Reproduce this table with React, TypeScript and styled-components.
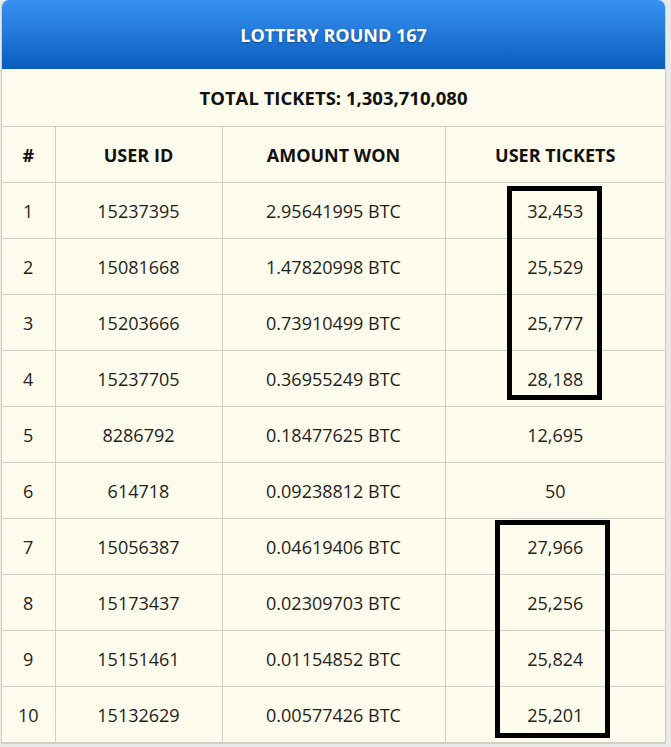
import styled, { createGlobalStyle } from "styled-components";

interface IWinner {
  rank: number;
  userId: string;
  amount: string;
  tickets: string;
}

const winners: IWinner[] = [
  { rank: 1, userId: "15237395", amount: "2.95641995 BTC", tickets: "32,453" },
  { rank: 2, userId: "15081668", amount: "1.47820998 BTC", tickets: "25,529" },
  { rank: 3, userId: "15203666", amount: "0.73910499 BTC", tickets: "25,777" },
  { rank: 4, userId: "15237705", amount: "0.36955249 BTC", tickets: "28,188" },
  { rank: 5, userId: "8286792", amount: "0.18477625 BTC", tickets: "12,695" },
  { rank: 6, userId: "614718", amount: "0.09238812 BTC", tickets: "50" },
  { rank: 7, userId: "15056387", amount: "0.04619406 BTC", tickets: "27,966" },
  { rank: 8, userId: "15173437", amount: "0.02309703 BTC", tickets: "25,256" },
  { rank: 9, userId: "15151461", amount: "0.01154852 BTC", tickets: "25,824" },
  { rank: 10, userId: "15132629", amount: "0.00577426 BTC", tickets: "25,201" },
];

const GlobalStyle = createGlobalStyle`
  html, body {
    margin: 0;
    padding: 0;
    background: #e9e9e9;
    font-family: "Open Sans", "Liberation Sans", sans-serif;
  }
`;

const Panel = styled.div`
  position: relative;
  width: 663px;
  margin-left: 1px;
  background-color: #fdfbec;
  border: 1px solid #cfcfc6;
  border-top: none;
  border-radius: 7px 7px 0 0;
`;

const Banner = styled.div`
  display: flex;
  align-items: center;
  justify-content: center;
  height: 69px;
  border-radius: 7px 7px 0 0;
  background: linear-gradient(to bottom, #3892f2, #0a5dbd);
  color: #ffffff;
  font-weight: 700;
  font-size: 18px;
  text-shadow: 0 1px 2px rgba(0, 0, 0, 0.35);
`;

const Table = styled.table`
  width: 100%;
  border-collapse: collapse;
  table-layout: fixed;
  color: #1f1f1f;
`;

const Col = styled.col<{ $width?: number }>`
  width: ${(p) => (p.$width ? `${p.$width}px` : "auto")};
`;

const TotalCell = styled.td`
  height: 57px;
  padding: 0;
  text-align: center;
  font-weight: 700;
  font-size: 18.5px;
  color: #111;
  border-bottom: 1px solid #cfcfc6;
`;

const HeadCell = styled.th`
  height: 55px;
  padding: 0;
  text-align: center;
  font-weight: 700;
  font-size: 18px;
  color: #111;
  border: 1px solid #cfcfc6;
  border-top: none;
  &:first-child { border-left: none; }
  &:last-child { border-right: none; }
`;

const Cell = styled.td`
  height: 55px;
  padding: 0;
  text-align: center;
  font-size: 18px;
  border: 1px solid #cfcfc6;
  &:first-child { border-left: none; }
  &:last-child { border-right: none; }
`;

const Highlight = styled.div<{ $left: number; $top: number; $width: number; $height: number }>`
  position: absolute;
  left: ${(p) => p.$left}px;
  top: ${(p) => p.$top}px;
  width: ${(p) => p.$width}px;
  height: ${(p) => p.$height}px;
  box-sizing: border-box;
  border: 5px solid #000;
  pointer-events: none;
`;

function App() {
  return (
    <>
      <GlobalStyle />
      <Panel>
        <Banner>LOTTERY ROUND 167</Banner>
        <Table>
          <colgroup>
            <Col $width={53} />
            <Col $width={167} />
            <Col $width={223} />
            <Col />
          </colgroup>
          <tbody>
            <tr>
              <TotalCell colSpan={4}>TOTAL TICKETS: 1,303,710,080</TotalCell>
            </tr>
            <tr>
              <HeadCell>#</HeadCell>
              <HeadCell>USER ID</HeadCell>
              <HeadCell>AMOUNT WON</HeadCell>
              <HeadCell>USER TICKETS</HeadCell>
            </tr>
            {winners.map((w) => (
              <tr key={w.rank}>
                <Cell>{w.rank}</Cell>
                <Cell>{w.userId}</Cell>
                <Cell>{w.amount}</Cell>
                <Cell>{w.tickets}</Cell>
              </tr>
            ))}
          </tbody>
        </Table>
        <Highlight $left={505} $top={186} $width={95} $height={214} />
        <Highlight $left={493} $top={520} $width={115} $height={218} />
      </Panel>
    </>
  );
}

export default App;
